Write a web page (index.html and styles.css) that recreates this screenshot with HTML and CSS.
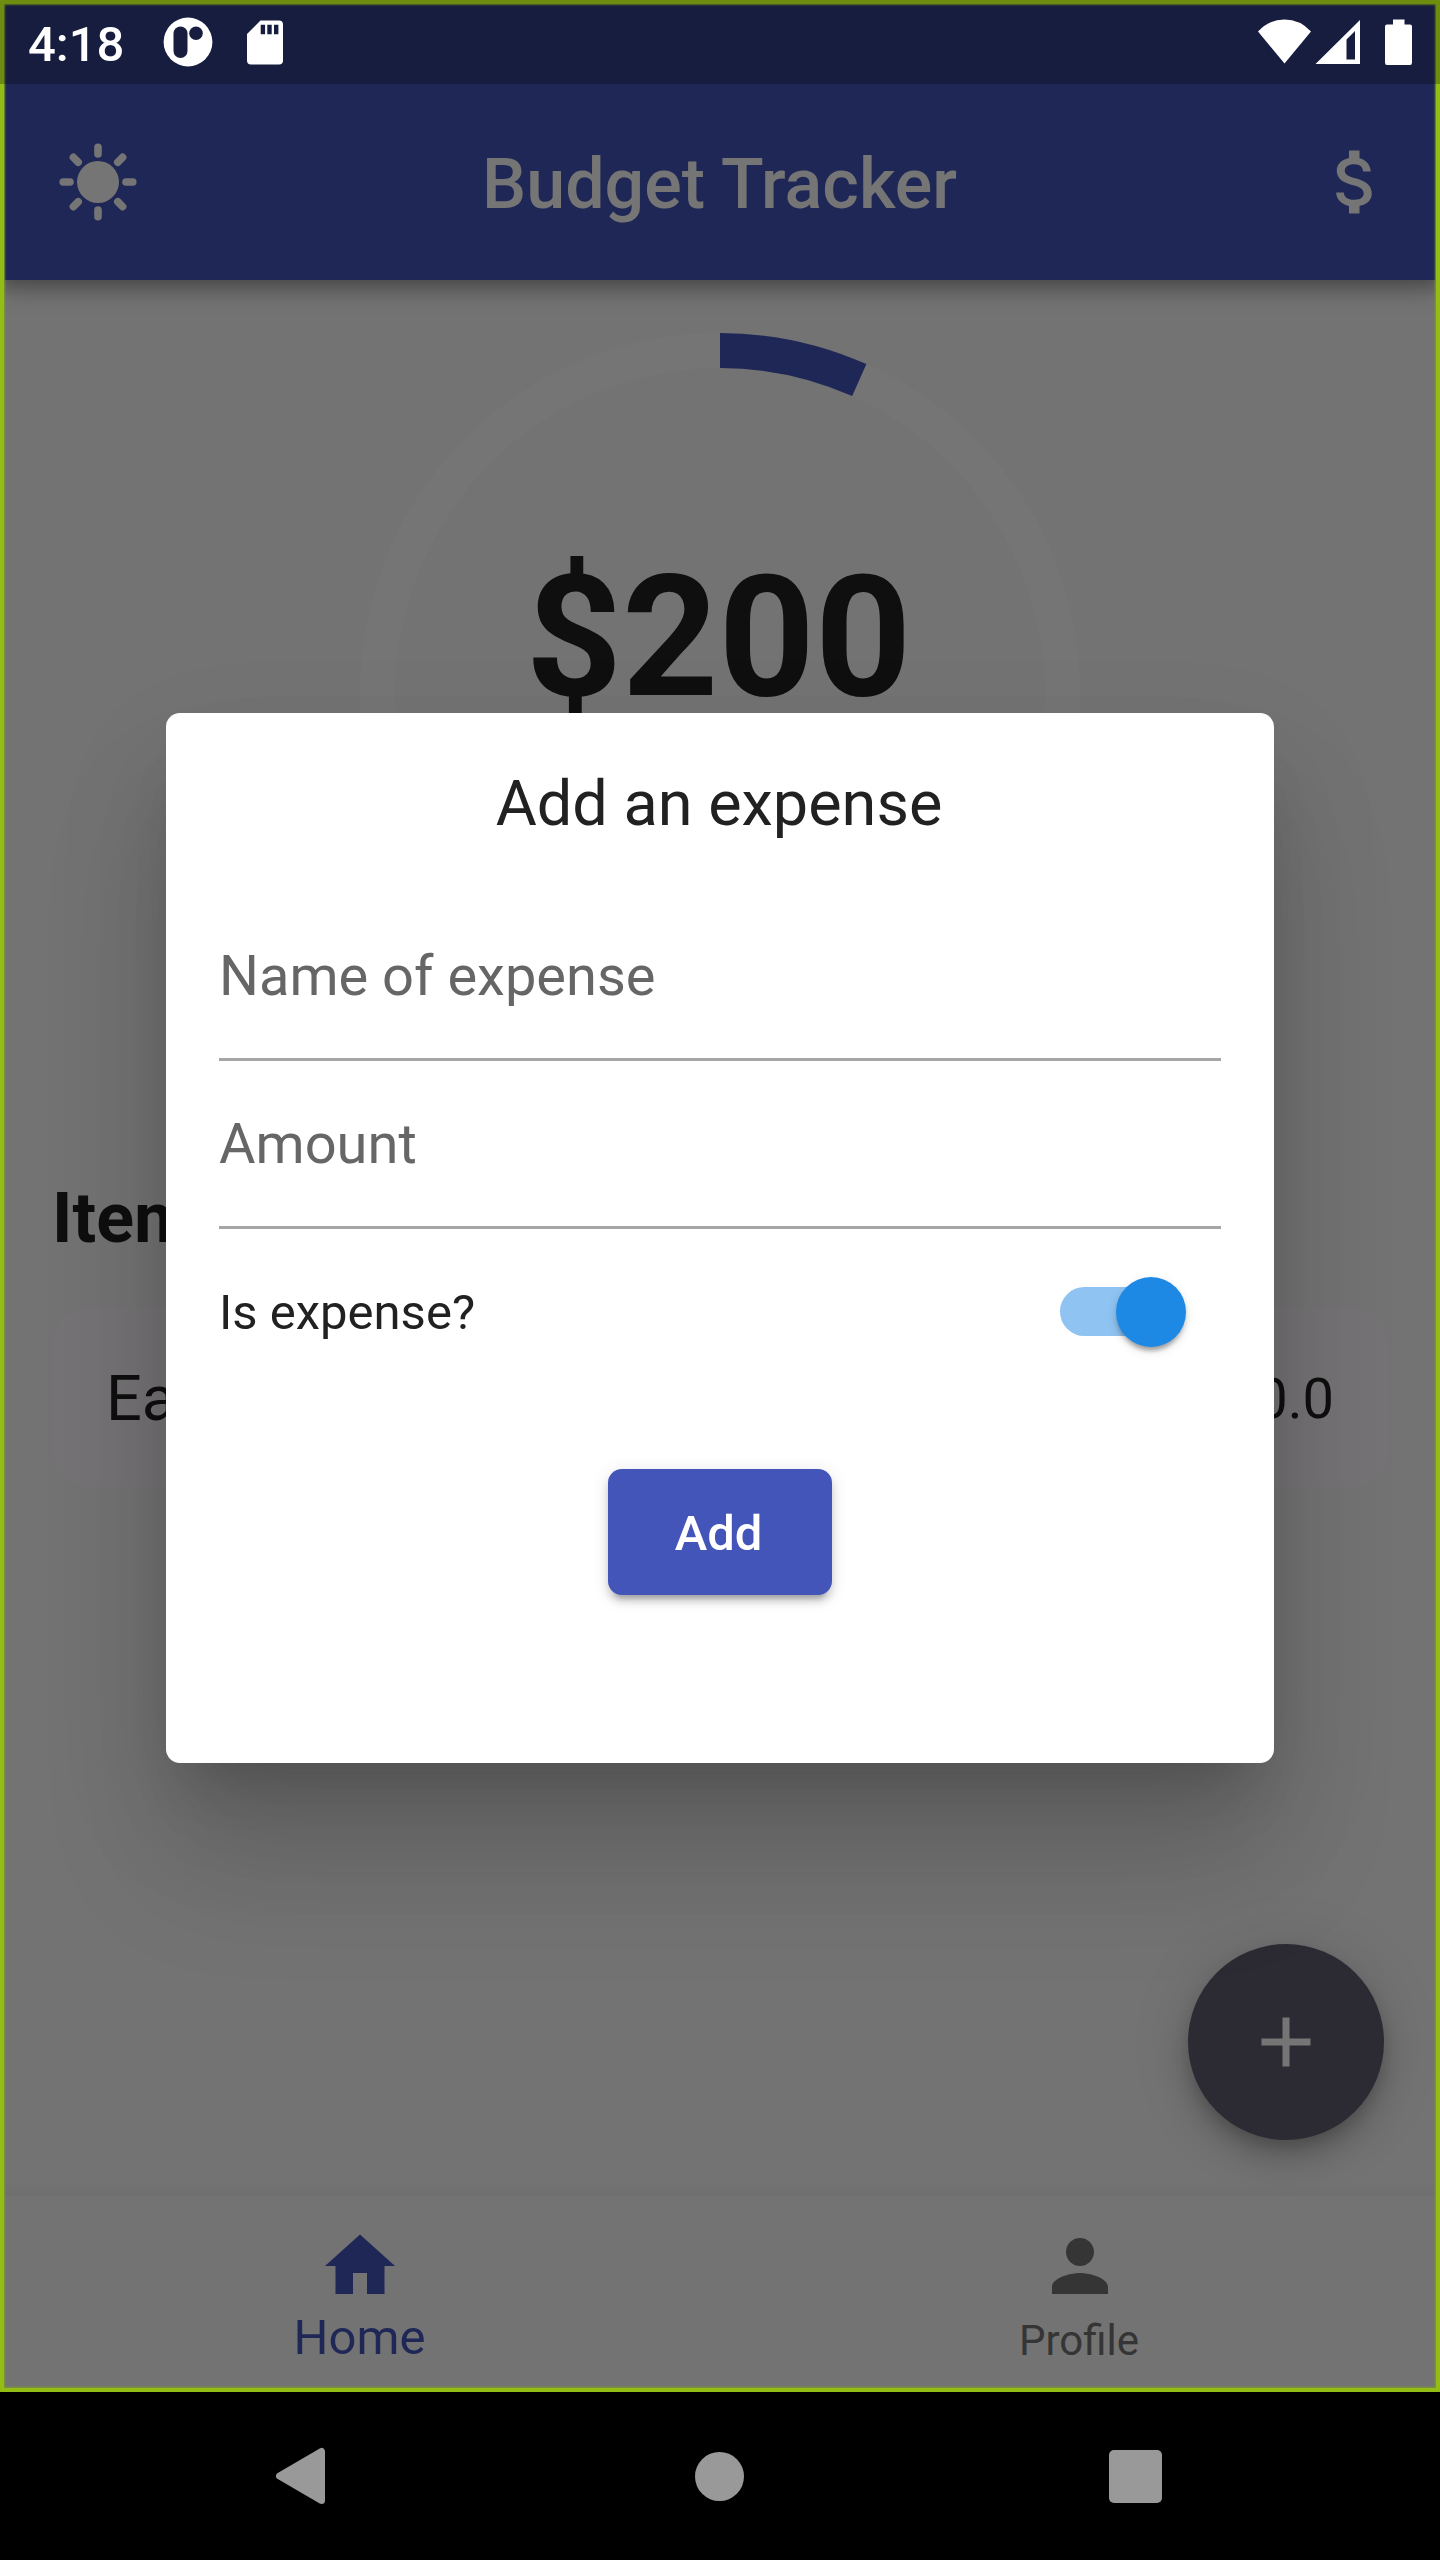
FILE: index.html
```html
<!DOCTYPE html>
<html lang="en">
<head>
<meta charset="utf-8">
<title>Budget Tracker</title>
<link rel="stylesheet" href="styles.css">
</head>
<body>
<div class="device">
  <div class="app">
    <header class="app-bar">
      <svg class="sun" viewBox="0 0 84 84" width="84" height="84">
        <circle cx="42" cy="42" r="21" fill="#fff"/>
        <g stroke="#fff" stroke-width="7.6" stroke-linecap="round">
          <path d="M42 14V7.200M42 70v6.800M14 42H7.200M70 42h6.800M22.200 22.200l-4.800-4.800M61.800 22.200l4.800-4.800M22.200 61.800l-4.800 4.800M61.800 61.800l4.800 4.800"/>
        </g>
      </svg>
      <h1 class="app-title">Budget Tracker</h1>
      <svg class="money" viewBox="0 0 24 24" width="84" height="84"><path fill="#fff" d="M11.800 10.900c-2.270-.59-3-1.200-3-2.150 0-1.090 1.010-1.850 2.700-1.850 1.780 0 2.440.85 2.500 2.100h2.210c-.07-1.720-1.120-3.300-3.210-3.810V3h-3v2.160c-1.940.42-3.500 1.680-3.500 3.610 0 2.310 1.910 3.460 4.700 4.130 2.500.6 3 1.480 3 2.410 0 .69-.49 1.790-2.700 1.790-2.060 0-2.870-.92-2.980-2.100h-2.200c.12 2.190 1.760 3.420 3.680 3.830V21h3v-2.150c1.950-.37 3.500-1.500 3.500-3.550 0-2.840-2.430-3.810-4.700-4.400z"/></svg>
    </header>

    <main class="content">
      <div class="gauge">
        <svg class="gauge-ring" viewBox="0 0 720 720" width="720" height="720">
          <circle cx="360" cy="360" r="342.500" fill="none" stroke="#fff" stroke-width="35"/>
          <path d="M360 17.500A342.500 342.500 0 0 1 499.300 47.100" fill="none" stroke="#4355b9" stroke-width="35"/>
        </svg>
        <div class="gauge-value">$200</div>
      </div>
      <h2 class="section-title">Items</h2>
      <div class="item">
        <span class="item-name">Earned</span>
        <span class="item-amount">$200.0</span>
      </div>
    </main>

    <nav class="tabs">
      <div class="tab tab-active">
        <svg viewBox="0 0 24 24" width="84" height="84"><path fill="currentColor" d="M10 20v-6h4v6h5v-8h3L12 3 2 12h3v8z"/></svg>
        <span class="tab-label">Home</span>
      </div>
      <div class="tab">
        <svg viewBox="0 0 24 24" width="84" height="84"><path fill="currentColor" d="M12 12c2.210 0 4-1.790 4-4s-1.790-4-4-4-4 1.790-4 4 1.790 4 4 4zm0 2c-2.670 0-8 1.340-8 4v2h16v-2c0-2.660-5.330-4-8-4z"/></svg>
        <span class="tab-label">Profile</span>
      </div>
    </nav>

    <div class="fab">
      <svg viewBox="0 0 24 24" width="84" height="84"><path fill="#fff" d="M19 13h-6v6h-2v-6H5v-2h6V5h2v6h6v2z"/></svg>
    </div>

    <div class="scrim">
      <div class="dialog">
        <h2 class="dialog-title">Add an expense</h2>
        <div class="field">Name of expense</div>
        <div class="field">Amount</div>
        <div class="switch-row">
          <span class="switch-label">Is expense?</span>
          <div class="switch"><div class="thumb"></div></div>
        </div>
        <div class="button">Add</div>
      </div>
    </div>

    <div class="frame"></div>

    <div class="status-bar">
      <span class="clock">4:18</span>
      <svg class="p-icon" viewBox="0 0 50 50" width="50" height="50">
        <circle cx="25" cy="25" r="24.400" fill="#fff"/>
        <rect x="10.500" y="9.500" width="14" height="31.500" rx="7" fill="#181d40"/>
        <circle cx="33" cy="16.200" r="6.800" fill="#181d40"/>
      </svg>
      <svg class="sd-icon" viewBox="0 0 36 45" width="36" height="45">
        <path fill="#fff" fill-rule="evenodd" d="M13.500.5H32Q36 .5 36 4.500V40.500Q36 44.500 32 44.500H4Q0 44.500 0 40.500V14ZM13.700 4.700v9.500h4.400V4.700ZM20.300 4.700v9.500h4.400V4.700ZM27 4.700v9.500h4.400V4.700Z"/>
      </svg>
      <svg class="signals" viewBox="0 0 156 48" width="156" height="48">
        <g fill="#fff">
          <path d="M0 12.500Q11 .5 26.500 .5T53 12.500L26.500 44.500Z"/>
          <path fill-rule="evenodd" d="M57.500 45L102 1V45ZM88.500 20.500V40.500H97V12Z"/>
          <path d="M135 .5h11.500v5h5.500q2 0 2 2v36q0 2.500-2 2.500h-23q-2 0-2-2.500V7.500q0-2 2-2h6Z"/>
        </g>
      </svg>
    </div>
  </div>

  <div class="system-nav">
    <svg class="nav-back" viewBox="0 0 50 58" width="50" height="58"><path d="M3.500 29L45.500 4.500V53.500Z" fill="#999" stroke="#999" stroke-width="7" stroke-linejoin="round"/></svg>
    <div class="nav-home"></div>
    <div class="nav-recent"></div>
  </div>
</div>
</body>
</html>
```
FILE: styles.css
```css
* { box-sizing: border-box; }

body {
  margin: 0;
  font-family: Roboto, "Liberation Sans", sans-serif;
  color: #212121;
}

h1, h2 { margin: 0; }
svg { display: block; flex: none; }

.device {
  width: 1440px;
  height: 2560px;
  display: flex;
  flex-direction: column;
  overflow: hidden;
  background: #000;
}

.app {
  position: relative;
  height: 2392px;
  display: flex;
  flex-direction: column;
  background: #fafafa;
  overflow: hidden;
}

.app-bar {
  position: relative;
  height: 280px;
  padding: 84px 42px 0 56px;
  display: grid;
  grid-template-columns: 84px 1fr 84px;
  align-items: center;
  background: #4355b9;
  color: #fff;
  box-shadow: 0 7px 14px -3px rgba(0, 0, 0, .2), 0 14px 17px rgba(0, 0, 0, .14), 0 3px 35px rgba(0, 0, 0, .12);
}

.app-title {
  padding: 3px 15px 0 0;
  font-size: 70px;
  line-height: 82px;
  font-weight: 500;
  text-align: center;
}

.content {
  flex: 1;
  padding: 53px 52px 0 52px;
}

.gauge {
  display: grid;
  justify-items: center;
  height: 720px;
}

.gauge-ring, .gauge-value { grid-area: 1 / 1; }

.gauge-value {
  padding: 206px 3px 0 0;
  font-size: 168px;
  line-height: 197px;
  font-weight: 700;
}

.section-title {
  margin-top: 124px;
  font-size: 70px;
  line-height: 82px;
  font-weight: 700;
}

.item {
  margin: 49px 0 0 1px;
  height: 179px;
  padding: 2px 54px 0 53px;
  display: flex;
  align-items: center;
  justify-content: space-between;
  border-radius: 35px;
  background: #fffbff;
}

.item-name { font-size: 63px; }
.item-amount { font-size: 56px; }

.tabs {
  position: relative;
  height: 196px;
  padding-top: 28px;
  display: flex;
  background: #fafafa;
  box-shadow: 0 -2px 14px rgba(0, 0, 0, .06);
}

.tab {
  flex: 1;
  display: flex;
  flex-direction: column;
  align-items: center;
  color: #737373;
  font-size: 42px;
}

.tab-label {
  height: 58px;
  padding: 8px 2px 0 0;
  line-height: 49px;
}

.tab-active {
  color: #4355b9;
  font-size: 49px;
}

.tab-active .tab-label {
  padding: 1px 1px 0 0;
  line-height: 58px;
}

.fab {
  position: absolute;
  right: 56px;
  bottom: 252px;
  width: 196px;
  height: 196px;
  display: grid;
  place-items: center;
  border-radius: 50%;
  background: #605e72;
  box-shadow: 0 10px 17px -3px rgba(0, 0, 0, .2), 0 21px 35px rgba(0, 0, 0, .14), 0 3px 63px rgba(0, 0, 0, .12);
}

.scrim {
  position: absolute;
  inset: 0;
  padding: 713px 166px 0 166px;
  background: rgba(0, 0, 0, .54);
}

.dialog {
  height: 1050px;
  padding: 54px 53px 0;
  display: flex;
  flex-direction: column;
  border-radius: 14px;
  background: #fff;
  box-shadow: 0 38px 52px -24px rgba(0, 0, 0, .16), 0 100px 130px 0 rgba(0, 0, 0, .13), 0 50px 120px 6px rgba(0, 0, 0, .08);
}

.dialog-title {
  margin-bottom: 52px;
  padding-right: 2px;
  font-size: 63px;
  line-height: 74px;
  font-weight: 400;
  text-align: center;
}

.field {
  height: 168px;
  padding-top: 1px;
  border-bottom: 3px solid #a6a6a6;
  font-size: 56px;
  line-height: 165px;
  color: #666;
}

.switch-row {
  height: 166px;
  padding-right: 46px;
  display: flex;
  align-items: center;
  justify-content: space-between;
}

.switch-label { font-size: 49px; }

.switch {
  width: 115px;
  height: 49px;
  margin-bottom: 1px;
  display: flex;
  align-items: center;
  border-radius: 25px;
  background: #8fc3f2;
}

.thumb {
  flex: none;
  width: 70px;
  height: 70px;
  margin-left: 56px;
  border-radius: 50%;
  background: #1e88e5;
  box-shadow: 0 7px 4px -4px rgba(0, 0, 0, .2), 0 4px 4px rgba(0, 0, 0, .14), 0 4px 11px rgba(0, 0, 0, .12);
}

.button {
  align-self: center;
  width: 224px;
  height: 126px;
  margin-top: 74px;
  padding: 2px 3px 0 0;
  border-radius: 14px;
  background: #4355b9;
  color: #fff;
  font-size: 49px;
  line-height: 126px;
  font-weight: 500;
  text-align: center;
  box-shadow: 0 10px 4px -7px rgba(0, 0, 0, .2), 0 7px 7px rgba(0, 0, 0, .14), 0 3px 17px rgba(0, 0, 0, .12);
}

/* debug outline around the activity window */
.frame {
  position: absolute;
  inset: 0;
  border: 4px solid #93bd15;
  box-shadow: inset 0 0 2px 1px #7d9a2b;
}

.status-bar {
  position: absolute;
  inset: 0 0 auto;
  height: 84px;
  padding: 0 26px 0 28px;
  display: flex;
  align-items: flex-start;
  background: rgba(0, 0, 0, .25);
  color: #fff;
}

.clock {
  width: 135px;
  padding-top: 16px;
  font-size: 49px;
  line-height: 58px;
  font-weight: 500;
}

.p-icon { margin-top: 17px; }
.sd-icon { margin: 20px 0 0 34px; }
.signals { margin: 19px 0 0 auto; }

.system-nav {
  height: 168px;
  padding: 0 278px 0 276px;
  display: grid;
  grid-template-columns: 50px 1fr 53px;
  align-items: center;
  justify-items: center;
}

.nav-home {
  width: 49px;
  height: 49px;
  margin-left: 3px;
  border-radius: 50%;
  background: #999;
}

.nav-recent {
  width: 53px;
  height: 53px;
  border-radius: 5px;
  background: #999;
}
```
